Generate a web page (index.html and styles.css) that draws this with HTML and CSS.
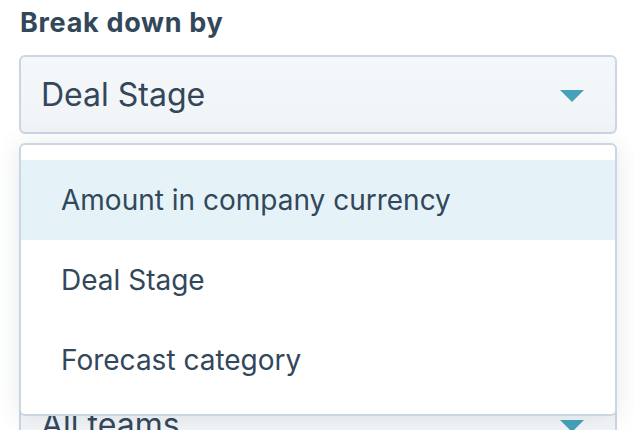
FILE: index.html
```html
<!DOCTYPE html>
<html lang="en">
<head>
    <meta charset="UTF-8">
    <meta name="viewport" content="width=device-width, initial-scale=1.0">
    <title>Break down by</title>
    <link rel="stylesheet" href="styles.css">
</head>
<body>
    <div class="panel">
        <div class="field">
            <h2 class="field-label">Break down by</h2>
            <div class="select">
                <span class="select-value">Deal Stage</span>
                <svg class="caret" width="24" height="12" viewBox="0 0 24 12"><polygon points="0,0 24,0 12,12" /></svg>
            </div>
            <ul class="menu">
                <li class="menu-item active">Amount in company currency</li>
                <li class="menu-item">Deal Stage</li>
                <li class="menu-item">Forecast category</li>
            </ul>
        </div>
        <div class="field field-teams">
            <div class="select">
                <span class="select-value">All teams</span>
                <svg class="caret" width="24" height="12" viewBox="0 0 24 12"><polygon points="0,0 24,0 12,12" /></svg>
            </div>
        </div>
    </div>
</body>
</html>
```

FILE: styles.css
```css
body {
    margin: 0;
    font-family: Inter, "Noto Sans", sans-serif;
    color: #33475b;
    background-color: #ffffff;
    overflow: hidden;
}
.panel {
    padding: 3px 17px 0 19px;
}
.field {
    position: relative;
}
.field-label {
    margin: 0 0 12px 1px;
    font-size: 27px;
    font-weight: 700;
    line-height: 40px;
    letter-spacing: 0.7px;
}
.select {
    display: flex;
    align-items: center;
    justify-content: space-between;
    box-sizing: border-box;
    height: 79px;
    padding: 0 31px 0 20px;
    background: linear-gradient(#f5f8fa, #f1f4f7);
    border: 2px solid #cbd6e2;
    border-radius: 6px;
}
.select-value {
    font-size: 32px;
}
.caret {
    fill: #45a2ba;
    margin-top: 2px;
}
.menu {
    position: absolute;
    top: calc(100% + 9px);
    left: 0;
    right: 0;
    z-index: 2;
    margin: 0;
    padding: 15px 0 14px;
    list-style: none;
    background: #ffffff;
    border: 2px solid #cbd6e2;
    border-radius: 6px;
    box-shadow: 0 2px 24px rgba(45, 62, 80, 0.12);
}
.menu-item {
    display: flex;
    align-items: center;
    height: 80px;
    padding-left: 40px;
    font-size: 28px;
}
.menu-item.active {
    background-color: #e5f3f8;
}
.field-teams {
    margin-top: 251px;
}
```
